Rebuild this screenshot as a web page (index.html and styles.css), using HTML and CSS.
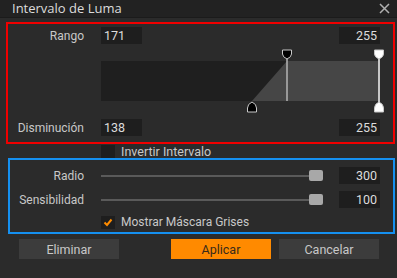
FILE: index.html
```html
<!DOCTYPE html>
<html lang="es">
<head>
  <meta charset="UTF-8" />
  <title>Intervalo de Luma</title>
  <link rel="stylesheet" href="styles.css">
</head>
<body>
  <div class="ventana">
    <div class="titulo">
      <span>Intervalo de Luma</span>
      <svg class="cerrar" width="11" height="11" viewBox="0 0 11 11">
        <path d="M1,1 L10,10 M10,1 L1,10" stroke="#b0b0b0" stroke-width="1.5" />
      </svg>
    </div>

    <div class="grupo grupo--rojo">
      <div class="fila">
        <label class="etiqueta">Rango</label>
        <div class="campo">171</div>
        <div class="espacio"></div>
        <div class="campo campo--der">255</div>
      </div>

      <svg class="curva" width="285" height="75" viewBox="0 0 285 75">
        <rect x="0" y="17" width="278" height="40" fill="#1f1f1f" />
        <polygon points="151,57 186,17 278,17 278,57" fill="#464646" />
        <line x1="186" y1="12" x2="186" y2="57" stroke="#b4b4b4" stroke-width="1.5" />
        <line x1="278" y1="12" x2="278" y2="60" stroke="#c8c8c8" stroke-width="2" />
        <!-- tiradores superiores -->
        <path d="M181.5,6 h9 v4 q0,3 -4.5,5 q-4.5,-2 -4.5,-5 z" fill="#000" stroke="#c8c8c8" stroke-width="1" />
        <path d="M273.5,6 h9 v4 q0,3 -4.5,5 q-4.5,-2 -4.5,-5 z" fill="#fff" stroke="#c8c8c8" stroke-width="1" />
        <!-- tiradores inferiores -->
        <path d="M146.5,68 h9 v-4 q0,-4 -4.5,-6 q-4.5,2 -4.5,6 z" fill="#000" stroke="#c8c8c8" stroke-width="1" />
        <path d="M273.5,68 h9 v-4 q0,-4 -4.5,-6 q-4.5,2 -4.5,6 z" fill="#fff" stroke="#c8c8c8" stroke-width="1" />
      </svg>

      <div class="fila">
        <label class="etiqueta">Disminución</label>
        <div class="campo">138</div>
        <div class="espacio"></div>
        <div class="campo campo--der">255</div>
      </div>
    </div>

    <div class="check-fila check-fila--invertir">
      <span class="caja"></span>
      <span>Invertir Intervalo</span>
    </div>

    <div class="grupo grupo--azul">
      <div class="fila">
        <label class="etiqueta">Radio</label>
        <div class="slider"><span class="pista"></span><span class="mango"></span></div>
        <div class="campo campo--der">300</div>
      </div>
      <div class="fila">
        <label class="etiqueta">Sensibilidad</label>
        <div class="slider"><span class="pista"></span><span class="mango"></span></div>
        <div class="campo campo--der">100</div>
      </div>
      <div class="check-fila">
        <span class="caja caja--marcada">
          <svg width="10" height="9" viewBox="0 0 10 9"><path d="M1.5,4.5 L4,7 L8.5,1.5" fill="none" stroke="#ff8c00" stroke-width="2" /></svg>
        </span>
        <span>Mostrar Máscara Grises</span>
      </div>
    </div>

    <div class="botones">
      <button class="boton">Eliminar</button>
      <button class="boton boton--aplicar">Aplicar</button>
      <button class="boton">Cancelar</button>
    </div>
  </div>
</body>
</html>
```

FILE: styles.css
```css
* {
  box-sizing: border-box;
  margin: 0;
  padding: 0;
}

body {
  background: #2b2b2b;
  font-family: Roboto, 'Open Sans', sans-serif;
  font-size: 12px;
  color: #c8c8c8;
}

.ventana {
  width: 397px;
  height: 278px;
  background: #2b2b2b;
}

.titulo {
  height: 18px;
  background: #222222;
  border-bottom: 1px solid #1b1b1b;
  display: flex;
  align-items: center;
  justify-content: space-between;
  padding: 0 7px 0 12px;
  color: #dcdcdc;
  font-family: 'Open Sans', sans-serif;
  font-size: 13px;
  line-height: 17px;
}

.grupo {
  border: 2px solid;
}

.grupo--rojo {
  border-color: #f00000;
  margin: 4px 2px 0 6px;
  padding: 3px 0 6px 0;
}

.grupo--azul {
  border-color: #1590f0;
  margin: 0 2px 0 8px;
  padding: 7px 0 3px 0;
}

.fila {
  display: flex;
  align-items: center;
  height: 17px;
  padding-right: 13px;
}

.grupo--azul .fila {
  margin-bottom: 7px;
}

.etiqueta {
  width: 76px;
  margin-right: 17px;
  text-align: right;
}

.grupo--azul .etiqueta {
  width: 74px;
}

.campo {
  width: 41px;
  height: 17px;
  background: #1e1e1e;
  color: #dcdcdc;
  padding: 0 3px;
  font-size: 12.5px;
  line-height: 17px;
}

.campo--der {
  text-align: right;
}

.espacio {
  flex: 1;
}

.curva {
  display: block;
  margin-left: 93px;
  overflow: visible;
}

.check-fila {
  display: flex;
  align-items: center;
  gap: 6px;
  height: 14px;
}

.check-fila--invertir {
  padding-left: 101px;
  font-size: 12.5px;
}

.grupo--azul .check-fila {
  padding-left: 91px;
  margin-top: 5px;
}

.caja {
  width: 14px;
  height: 13px;
  background: #1e1e1e;
  display: flex;
  align-items: center;
  justify-content: center;
}

.slider {
  position: relative;
  width: 222px;
  height: 12px;
  margin-right: 16px;
}

.pista {
  position: absolute;
  left: 0;
  right: 0;
  top: 5px;
  height: 2px;
  background: #5a5a5a;
}

.mango {
  position: absolute;
  right: 0;
  top: 0;
  width: 14px;
  height: 11px;
  border-radius: 2px;
  background: #a8a8a8;
}

.botones {
  display: flex;
  padding: 5px 0 0 19px;
}

.boton {
  width: 100px;
  height: 20px;
  border: none;
  background: #3c3c3c;
  color: #c8c8c8;
  font-family: inherit;
  font-size: 12.5px;
}

.boton--aplicar {
  background: #ff8a00;
  color: #3a2a1a;
  margin: 0 8px 0 52px;
}
```
